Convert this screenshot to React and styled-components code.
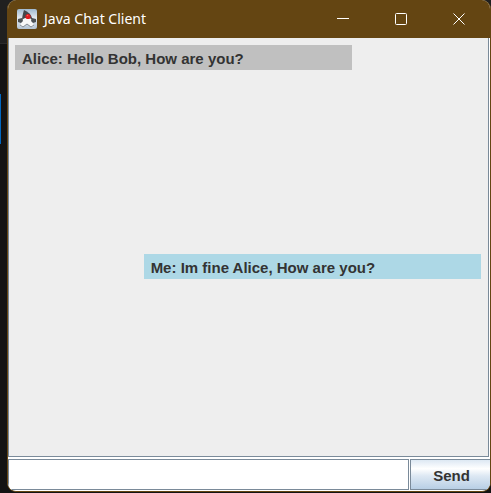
import React from "react";
import styled, { createGlobalStyle } from "styled-components";

const GlobalStyle = createGlobalStyle`
  * { box-sizing: border-box; }
  body { margin: 0; background: #151515; }
`;

const Desktop = styled.div`
  min-height: 100vh;
  display: flex;
  padding: 0 0 1px 7px;
  background:
    linear-gradient(#0067c0, #0067c0) 0 94px / 1px 50px no-repeat,
    linear-gradient(#2b2b2b, #2b2b2b) 0 43px / 7px 1px no-repeat,
    linear-gradient(#202020, #202020) 0 0 / 100% 43px no-repeat,
    #131313;
`;

const Window = styled.main`
  flex: 1;
  min-width: 0;
  display: flex;
  flex-direction: column;
  overflow: hidden;
  border: 1px solid #644512;
  border-top: 0;
  border-radius: 9px;
  background: #ffffff;
  font-family: "Liberation Sans", Arial, sans-serif;
`;

const TitleBar = styled.header`
  height: 38px;
  flex: none;
  display: flex;
  align-items: center;
  padding: 0 2px 0 9px;
  background: #644512;
  color: #ffffff;
`;

const Title = styled.h1`
  flex: 1;
  margin: 0 0 0 7px;
  font: 400 14px/20px "Noto Sans", "Open Sans", sans-serif;
  white-space: nowrap;
`;

const CaptionButton = styled.button`
  width: 58px;
  height: 38px;
  display: grid;
  place-items: center;
  padding: 0;
  border: 0;
  background: transparent;
  color: inherit;
`;

const ChatPane = styled.section`
  flex: 1;
  display: grid;
  grid-template-rows: 1fr 1fr;
  row-gap: 7px;
  margin-right: 1px;
  padding: 7px 7px 0 6px;
  border: 1px solid #7a8a99;
  border-top: 0;
  background: #eeeeee;
`;

const Message = styled.p`
  align-self: start;
  justify-self: ${({ $mine }) => ($mine ? "end" : "start")};
  width: 72.4%;
  margin: 0;
  padding: 5px 7px 3px;
  background: ${({ $mine }) => ($mine ? "#add8e6" : "#c0c0c0")};
  color: #333333;
  font-size: 15px;
  font-weight: 700;
  line-height: 17px;
`;

const Composer = styled.form`
  flex: none;
  height: 32px;
  display: flex;
  gap: 1px;
  margin-top: 2px;
  padding-bottom: 1px;
`;

const MessageInput = styled.input`
  flex: 1;
  min-width: 0;
  padding: 0 6px;
  border: 1px solid #7a8a99;
  border-radius: 0;
  outline: 0;
  background: #ffffff;
  color: #333333;
  font: 15px "Liberation Sans", Arial, sans-serif;
`;

const SendButton = styled.button`
  width: 80px;
  padding: 2px 0 0 2px;
  border: 1px solid #7a8a99;
  border-right: 0;
  border-radius: 0;
  background: linear-gradient(#dde8f3 0%, #ffffff 30%, #dde8f3 55%, #b8cfe5 100%);
  color: #333333;
  font: 700 15px/18px "Liberation Sans", Arial, sans-serif;
`;

function DukeIcon() {
  return (
    <svg width="20" height="20" viewBox="0 0 20 20" aria-hidden="true">
      <defs>
        <linearGradient id="tile" x1="0" y1="0" x2="0" y2="1">
          <stop offset="0" stopColor="#9fb9d0" />
          <stop offset="0.45" stopColor="#e4eaf0" />
          <stop offset="1" stopColor="#b3c4d4" />
        </linearGradient>
      </defs>
      <rect width="20" height="20" rx="2" fill="url(#tile)" />
      <path d="M7 1C11 3 14 5 15 9L15.5 13L5 12C5 8 6 4 7 1Z" fill="#44484c" />
      <path d="M5 11C8 8 13 8 15 11L17 17L14 18L10 15L6 18L3 17Z" fill="#f8f8f8" />
      <path d="M5 9L1 10V13L4 14L6 12M15 9L19 10V13L16 14L14 12" fill="#4d5256" />
      <path d="M3 16L6 18L10 15L14 18L17 16" fill="none" stroke="#858c93" />
      <circle cx="11" cy="7.5" r="2.6" fill="#df1c20" />
      <circle cx="10.5" cy="6.5" r="0.8" fill="#ff5955" />
    </svg>
  );
}

const glyphs = {
  Minimize: <path d="M0 5.5H12" />,
  Maximize: <rect x="0.5" y="0.5" width="11" height="11" rx="1" />,
  Close: <path d="M0.5 0.5L11.5 11.5M11.5 0.5L0.5 11.5" />,
};

const messages = [
  { id: 1, author: "Alice", text: "Hello Bob, How are you?", mine: false },
  { id: 2, author: "Me", text: "Im fine Alice, How are you?", mine: true },
];

export default function App() {
  return (
    <>
      <GlobalStyle />
      <Desktop>
        <Window>
          <TitleBar>
            <DukeIcon />
            <Title>Java Chat Client</Title>
            {Object.entries(glyphs).map(([name, glyph]) => (
              <CaptionButton key={name} type="button" aria-label={name}>
                <svg width="12" height="12" viewBox="0 0 12 12" fill="none" stroke="currentColor">
                  {glyph}
                </svg>
              </CaptionButton>
            ))}
          </TitleBar>
          <ChatPane aria-label="Messages">
            {messages.map(({ id, author, text, mine }) => (
              <Message key={id} $mine={mine}>
                {author}: {text}
              </Message>
            ))}
          </ChatPane>
          <Composer onSubmit={(event) => event.preventDefault()}>
            <MessageInput type="text" aria-label="Message" />
            <SendButton type="submit">Send</SendButton>
          </Composer>
        </Window>
      </Desktop>
    </>
  );
}
